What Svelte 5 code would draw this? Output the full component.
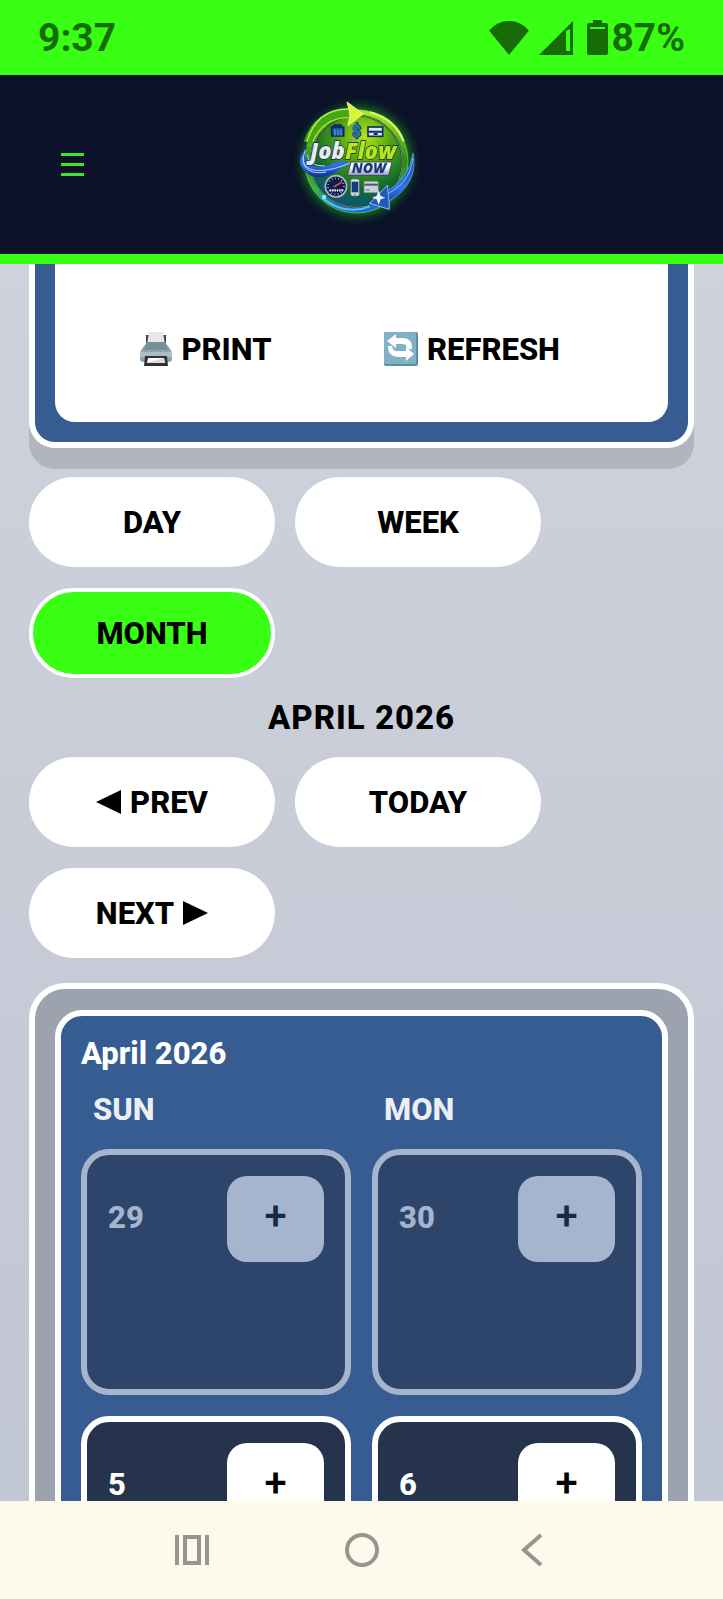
<script>
    let view = 'MONTH';

    const views = ['DAY', 'WEEK', 'MONTH'];
    const weekdays = ['SUN', 'MON'];

    // days outside of the current month are dimmed
    const days = [
        { day: 29, outside: true },
        { day: 30, outside: true },
        { day: 5, outside: false },
        { day: 6, outside: false }
    ];
</script>

<div class="screen">
    <div class="status">
        <span>9:37</span>
        <div class="status-icons">
            <svg width="40" height="34" viewBox="0 0 40 34">
                <path d="M0 9.500Q8 0 20 0T40 9.500L20 34Z" />
            </svg>
            <svg width="34" height="34" viewBox="0 0 34 34">
                <path fill-rule="evenodd" d="M34 0V34H0ZM27 10V30H31V8Z" />
            </svg>
            <span class="battery">
                <svg width="21" height="35" viewBox="0 0 21 35">
                    <path fill-rule="evenodd" d="M6 0H15V3H19Q21 3 21 5V33Q21 35 19 35H2Q0 35 0 33V5Q0 3 2 3H6ZM3 7V9H18V7Z" />
                </svg>
                87%
            </span>
        </div>
    </div>

    <header>
        <button class="menu" aria-label="Menu">
            <svg width="23" height="23" viewBox="0 0 23 23">
                <path d="M0 1.500H23M0 11.500H23M0 21.500H23" stroke="#3be52f" stroke-width="3" />
            </svg>
        </button>
        <svg class="logo" width="150" height="149" viewBox="20 0 450 447">
            <defs>
                <radialGradient id="glow">
                    <stop offset="70%" stop-color="#2bc01a" stop-opacity="0.800" />
                    <stop offset="84%" stop-color="#1b8420" stop-opacity="0.350" />
                    <stop offset="100%" stop-color="#0a1128" stop-opacity="0" />
                </radialGradient>
                <radialGradient id="disc" cx="60%" cy="22%" r="85%">
                    <stop offset="0%" stop-color="#b5e516" />
                    <stop offset="35%" stop-color="#4fa414" />
                    <stop offset="70%" stop-color="#12682b" />
                    <stop offset="100%" stop-color="#0b5190" />
                </radialGradient>
                <linearGradient id="ring" x1="0" y1="0" x2="0" y2="1">
                    <stop offset="0%" stop-color="#a7ea1c" />
                    <stop offset="50%" stop-color="#268a22" />
                    <stop offset="78%" stop-color="#35b548" />
                    <stop offset="100%" stop-color="#1a62dc" />
                </linearGradient>
                <linearGradient id="silver" x1="0" y1="0" x2="0" y2="1">
                    <stop offset="35%" stop-color="#fff" />
                    <stop offset="100%" stop-color="#98a4b8" />
                </linearGradient>
                <linearGradient id="blue" x1="0" y1="0" x2="0" y2="1">
                    <stop offset="0%" stop-color="#123b93" />
                    <stop offset="60%" stop-color="#2f75ee" />
                    <stop offset="100%" stop-color="#0c2d8d" />
                </linearGradient>
            </defs>
            <circle cx="230" cy="214" r="200" fill="url(#glow)" />
            <circle cx="228" cy="214" r="149" fill="#0b2442" />
            <circle cx="228" cy="214" r="135" fill="url(#disc)" />
            <circle cx="228" cy="214" r="147" fill="none" stroke="url(#ring)" stroke-width="15" />
            <circle cx="228" cy="214" r="155" fill="none" stroke="#86cf45" stroke-width="2" />
            <circle cx="228" cy="214" r="138" fill="none" stroke="#a5d85a" stroke-width="2" />
            <path d="M83 158Q112 70 205 70" fill="none" stroke="#43a814" stroke-width="26" />
            <path d="M80 155Q109 56 205 57" fill="none" stroke="#b9e951" stroke-width="4" />
            <path d="M98 155Q126 84 205 82" fill="none" stroke="#a8e31f" stroke-width="4" />
            <path d="M200 36L248 72L203 107L210 72Z" fill="#d4f62f" stroke="#efffa0" stroke-width="3" />
            <path d="M270 67Q345 87 370 154" fill="none" stroke="#dcf66c" stroke-width="7" />
            <!-- calendar and card -->
            <path d="M154 111H190V138H154ZM162 111V105H182V111" fill="#1d55a7" stroke="#0b225d" stroke-width="5" />
            <path d="M164 119V137M173 119V137M182 119V137" stroke="#76a8dc" stroke-width="3" />
            <rect x="263" y="111" width="44" height="28" fill="#dce7ee" stroke="#122a66" stroke-width="5" />
            <path d="M265 125H305M280 132H292" stroke="#162c68" stroke-width="6" />
            <!-- left wave -->
            <path d="M82 168Q42 205 70 240Q104 281 167 245Q197 223 218 221Q181 205 148 225Q90 243 77 207Q70 190 82 168Z" fill="url(#blue)" />
            <path d="M75 180Q52 237 112 242Q163 241 208 219M67 202Q70 258 137 246M81 194Q86 230 134 228" fill="none" stroke="#b8d5ff" stroke-width="3" />
            <!-- right arrow -->
            <path d="M398 190Q416 278 326 334L327 358L268 340L321 286L319 305Q388 265 398 190Z" fill="url(#blue)" stroke="#5493ea" stroke-width="3" />
            <path d="M397 205Q390 282 309 318" fill="none" stroke="#90bfff" stroke-width="3" />
            <path d="M268 340L321 286L326 334L327 358Z" fill="#2459b8" stroke="#b8d7ff" stroke-width="2" />
            <path d="M126 324Q195 379 269 349" fill="none" stroke="#4ec5ff" stroke-width="6" />
            <circle cx="131" cy="321" r="7" fill="#60f4ff" />
            <path d="M212 216H335L325 256H201Z" fill="url(#silver)" stroke="#3d4960" stroke-width="3" />
            <text class="word">
                <tspan x="215" y="140" class="dollar">$</tspan><tspan x="89" y="207" class="job">Job</tspan><tspan class="flow">Flow</tspan><tspan x="214" y="250" class="now">NOW</tspan>
            </text>
            <!-- gauge, phone and card -->
            <circle cx="167" cy="289" r="32" fill="#0b1d4d" stroke="#aab4c5" stroke-width="5" />
            <circle cx="167" cy="289" r="24" fill="none" stroke="#e4edff" stroke-width="5" stroke-dasharray="2 8" />
            <path d="M160 291L185 276" stroke="#f33e48" stroke-width="5" />
            <path d="M148 301H188" stroke="#e2e8f5" stroke-width="7" stroke-dasharray="5 2" />
            <rect x="211" y="267" width="26" height="51" rx="5" fill="#d8dde4" stroke="#5e6870" stroke-width="2" />
            <rect x="214" y="275" width="20" height="32" fill="#123f83" />
            <circle cx="224" cy="313" r="2" fill="#25354a" />
            <rect x="251" y="274" width="43" height="34" rx="3" fill="#cbd2d8" stroke="#788490" stroke-width="2" />
            <path d="M252 284H293" stroke="#425e75" stroke-width="6" />
            <path d="M256 300H268" stroke="#77838c" stroke-width="4" />
            <path d="M295 301L301 318L315 323L301 328L295 344L289 328L275 323L289 318Z" fill="#e8fbff" />
        </svg>
    </header>

    <main>
        <section class="panel">
            <div class="actions">
                <button class="pill">
                    <svg width="32" height="34" viewBox="0 0 32 34">
                        <path d="M6 3H26V14H6Z" fill="#3d4549" />
                        <path d="M9 0H23L25 13H7Z" fill="#e6e8e8" />
                        <path d="M7 10H25L31 18Q32 20 32 23V27Q32 30 29 30H3Q0 30 0 27V23Q0 20 1 18Z" fill="#90a4ae" />
                        <path d="M7 10H25L28 18H4Z" fill="#78909c" />
                        <path d="M0 20H32V25H0Z" fill="#a9bdc6" />
                        <path d="M5 24H27L28 34H4Z" fill="#303336" />
                        <path d="M8 26H24L25 31H7Z" fill="#fff" />
                        <path d="M8 30L24 26L25 31H7Z" fill="#dedede" />
                    </svg>
                    PRINT
                </button>
                <button class="pill">
                    <svg width="34" height="34" viewBox="0 0 34 34">
                        <rect width="34" height="34" rx="2" fill="#5690a9" />
                        <rect width="32" height="32" rx="2" fill="#82b1c6" />
                        <path d="M3 9L12 2V6H18Q28 6 28 15V17H23Q23 12 18 12H12V16Z" fill="#fff" />
                        <path d="M30 22L22 15V19H12Q9 19 8 14H4Q4 25 15 25H22V29Z" fill="#fff" />
                    </svg>
                    REFRESH
                </button>
            </div>
        </section>

        <div class="row">
            {#each views as name}
                <button class="pill" class:active={view === name} on:click={() => view = name}>{name}</button>
            {/each}
        </div>

        <h1>APRIL 2026</h1>

        <div class="row">
            <button class="pill">
                <svg width="25" height="24" viewBox="0 0 25 24"><path d="M25 0V24L0 12Z" /></svg>
                PREV
            </button>
            <button class="pill">TODAY</button>
            <button class="pill">
                NEXT
                <svg width="25" height="24" viewBox="0 0 25 24"><path d="M0 0V24L25 12Z" /></svg>
            </button>
        </div>

        <section class="calendar">
            <div class="month">
                <h2>April 2026</h2>
                <div class="grid">
                    {#each weekdays as weekday}
                        <div class="weekday">{weekday}</div>
                    {/each}
                    {#each days as { day, outside }}
                        <div class="day" class:outside>
                            <span>{day}</span>
                            <button class="add" aria-label="Add job">+</button>
                        </div>
                    {/each}
                </div>
            </div>
        </section>
    </main>

    <nav>
        <button aria-label="Recent apps">
            <svg width="34" height="32" viewBox="0 0 34 32">
                <path d="M2 1V31M32 1V31M10 3H24V29H10Z" />
            </svg>
        </button>
        <button aria-label="Home">
            <svg width="34" height="34" viewBox="0 0 34 34"><circle cx="17" cy="17" r="15" /></svg>
        </button>
        <button aria-label="Back">
            <svg width="34" height="34" viewBox="0 0 34 34"><path d="M26 2L9 17L26 32" /></svg>
        </button>
    </nav>
</div>

<style>
    :global(body) {
        margin: 0;
        font-family: Roboto, "Liberation Sans", sans-serif;
    }
    .screen {
        display: flex;
        flex-direction: column;
        height: 100vh;
        overflow: hidden;
    }
    button {
        padding: 0;
        border: 0;
        background: none;
        font: inherit;
        color: #000;
        cursor: pointer;
    }
    svg {
        display: block;
        flex: none;
    }
    .status {
        display: flex;
        flex: none;
        align-items: center;
        justify-content: space-between;
        height: 75px;
        padding: 0 38px;
        background: #39ff14;
        color: #176c07;
        fill: #176c07;
        font-size: 39px;
        font-weight: 700;
    }
    .status-icons {
        display: flex;
        align-items: center;
        gap: 10px;
    }
    .battery {
        display: flex;
        align-items: center;
        gap: 3px;
        padding-left: 4px;
    }
    header {
        display: grid;
        flex: none;
        grid-template-columns: 1fr auto 1fr;
        align-items: center;
        height: 179px;
        padding: 0 61px;
        border-bottom: 10px solid #39ff14;
        background: #0a1128;
    }
    .menu {
        justify-self: start;
    }
    .word {
        font-family: "Open Sans", sans-serif;
        font-size: 66px;
        font-style: italic;
        font-weight: 800;
        stroke: #17233a;
        stroke-width: 4px;
        paint-order: stroke;
    }
    .job {
        fill: #e6ebf2;
    }
    .flow {
        fill: #b2e81b;
    }
    .now {
        font-size: 42px;
        fill: #183981;
        stroke: none;
    }
    .dollar {
        font-family: Roboto, sans-serif;
        font-size: 48px;
        font-style: normal;
        fill: #2478c4;
        stroke: #0b2860;
    }
    main {
        flex: 1;
        min-height: 0;
        padding: 0 29px;
        overflow: hidden;
        background: linear-gradient(#ced2dc, #c1c6d3);
        font-size: 31px;
        font-weight: 800;
    }
    .panel {
        margin-bottom: 29px;
        padding: 0 20px 20px;
        border: 6px solid #fff;
        border-top: 0;
        border-radius: 0 0 26px 26px;
        background: #375c92;
        box-shadow: 0 21px 0 rgba(0, 0, 0, 0.13);
    }
    .actions {
        display: flex;
        flex-wrap: wrap;
        gap: 20px;
        padding: 40px 28px 28px;
        border-radius: 0 0 20px 20px;
        background: #fff;
    }
    .row {
        display: flex;
        flex-wrap: wrap;
        gap: 21px 20px;
    }
    .pill {
        display: flex;
        align-items: center;
        justify-content: center;
        gap: 9px;
        width: 246px;
        height: 90px;
        border-radius: 45px;
        background: #fff;
    }
    .pill.active {
        border: 4px solid #fff;
        background: #39ff14;
    }
    h1 {
        margin: 20px 0;
        font-size: 33px;
        font-weight: 800;
        line-height: 39px;
        letter-spacing: 1px;
        text-align: center;
    }
    .calendar {
        margin-top: 25px;
        padding: 21px 20px;
        border: 6px solid #fff;
        border-radius: 36px;
        background: #9ca2ae;
    }
    .month {
        padding: 20px;
        border: 6px solid #fff;
        border-radius: 27px;
        background: #375c92;
        color: #fff;
    }
    h2 {
        margin: 0;
        font-size: 31px;
        font-weight: 800;
        line-height: 36px;
    }
    .grid {
        display: grid;
        grid-template-columns: 1fr 1fr;
        gap: 21px;
    }
    .weekday {
        padding: 20px 12px 0;
        line-height: 36px;
        opacity: 0.9;
    }
    .day {
        display: flex;
        align-items: flex-start;
        justify-content: space-between;
        box-sizing: border-box;
        height: 246px;
        padding: 21px;
        border: 6px solid #fff;
        border-radius: 28px;
        background: #26334c;
    }
    .day span {
        line-height: 84px;
    }
    .outside {
        opacity: 0.55;
    }
    .add {
        width: 97px;
        height: 86px;
        padding-bottom: 6px;
        border-radius: 20px;
        background: #fff;
        font-size: 40px;
        font-weight: 500;
    }
    nav {
        display: flex;
        flex: none;
        align-items: center;
        justify-content: center;
        gap: 136px;
        height: 98px;
        background: #fdf9ec;
    }
    nav svg {
        fill: none;
        stroke: #98958c;
        stroke-width: 4px;
    }
</style>
